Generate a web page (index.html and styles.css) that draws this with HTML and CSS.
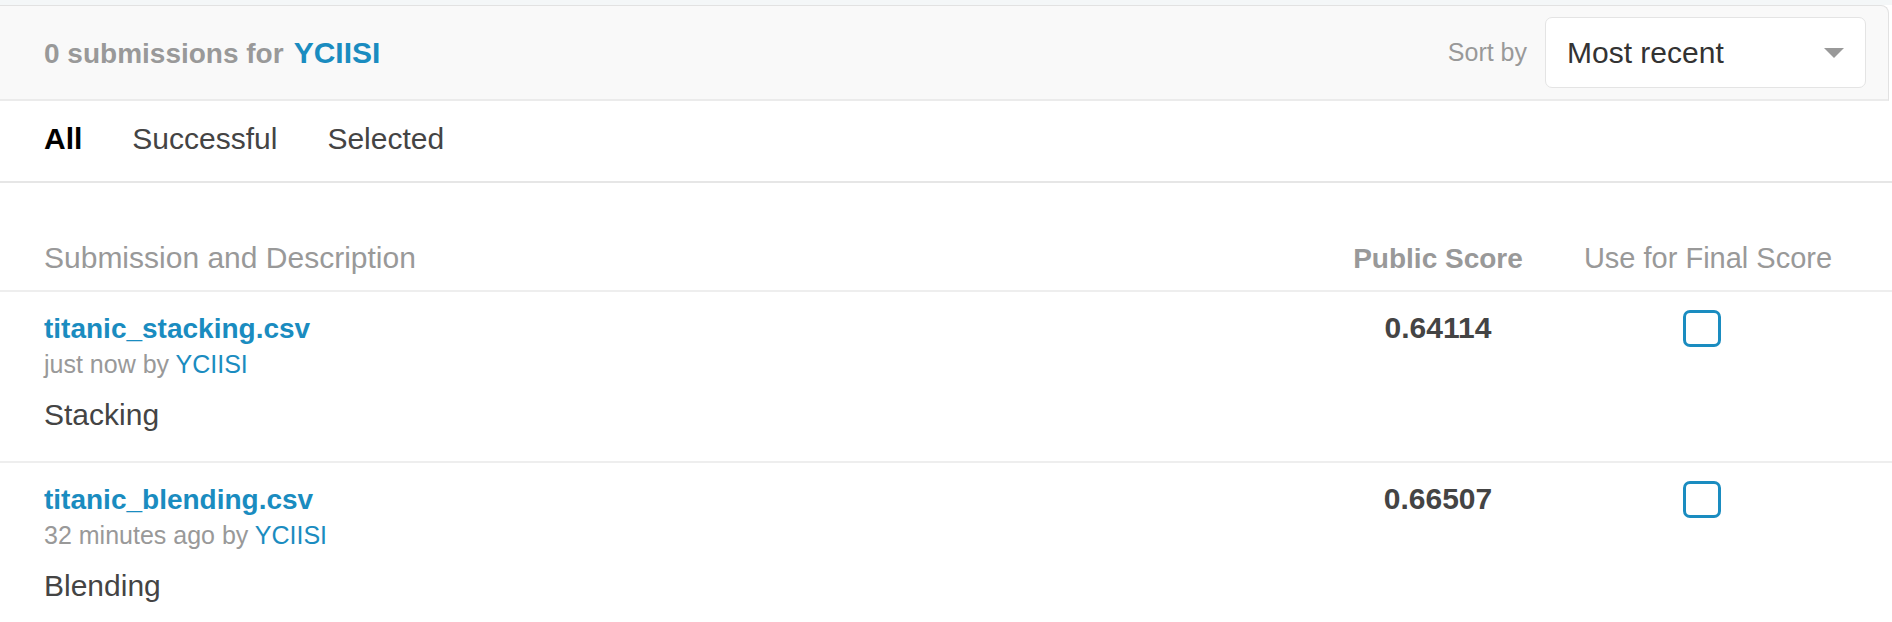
FILE: index.html
```html
<!DOCTYPE html>
<html lang="en">
<head>
<meta charset="utf-8">
<title>Submissions</title>
<link rel="stylesheet" href="styles.css">
</head>
<body>
<div class="top-strip"></div>
<header class="subhead">
  <div class="count">
    <span class="count-label">0 submissions for</span>
    <a class="count-user" href="#">YCIISI</a>
  </div>
  <div class="sort">
    <span class="sort-label">Sort by</span>
    <div class="select">
      <span class="select-value">Most recent</span>
      <span class="caret"></span>
    </div>
  </div>
</header>
<nav class="tabs">
  <a class="tab tab-active" href="#">All</a>
  <a class="tab" href="#">Successful</a>
  <a class="tab" href="#">Selected</a>
</nav>
<section class="table">
  <div class="thead">
    <div class="th th-main">Submission and Description</div>
    <div class="th th-score">Public Score</div>
    <div class="th th-final">Use for Final Score</div>
  </div>
  <div class="row">
    <div class="cell-main">
      <a class="file" href="#">titanic_stacking.csv</a>
      <div class="meta">just now by <a class="user" href="#">YCIISI</a></div>
      <div class="desc">Stacking</div>
    </div>
    <div class="score">0.64114</div>
    <div class="check"></div>
  </div>
  <div class="row">
    <div class="cell-main">
      <a class="file" href="#">titanic_blending.csv</a>
      <div class="meta">32 minutes ago by <a class="user" href="#">YCIISI</a></div>
      <div class="desc">Blending</div>
    </div>
    <div class="score">0.66507</div>
    <div class="check"></div>
  </div>
</section>
</body>
</html>
```
FILE: styles.css
```css
* { box-sizing: border-box; }
html, body {
  margin: 0;
  padding: 0;
  background: #ffffff;
  font-family: "Liberation Sans", Arial, sans-serif;
  overflow: hidden;
}
a { text-decoration: none; }

.top-strip {
  height: 5px;
  background: #f4f7f8;
}

.subhead {
  display: flex;
  align-items: center;
  justify-content: space-between;
  height: 96px;
  margin-right: 3px;
  padding: 0 22px 0 44px;
  background: #f9f9f9;
  border-top: 1px solid #e2e2e2;
  border-right: 1px solid #e2e2e2;
  border-bottom: 2px solid #ebebeb;
  border-top-right-radius: 8px;
}
.count {
  display: flex;
  align-items: baseline;
  font-weight: 700;
}
.count-label {
  font-size: 28px;
  line-height: 33px;
  color: #999999;
}
.count-user {
  font-size: 30px;
  line-height: 33px;
  color: #1a8cc0;
  margin-left: 10px;
}

.sort {
  display: flex;
  align-items: center;
  gap: 18px;
}
.sort-label {
  font-size: 25px;
  line-height: 29px;
  color: #999999;
}
.select {
  display: flex;
  align-items: center;
  justify-content: space-between;
  width: 321px;
  height: 71px;
  padding: 0 21px;
  background: #ffffff;
  border: 1px solid #e4e4e4;
  border-radius: 7px;
}
.select-value {
  font-size: 30px;
  line-height: 34px;
  color: #333333;
}
.caret {
  width: 0;
  height: 0;
  border-left: 10px solid transparent;
  border-right: 10px solid transparent;
  border-top: 10px solid #999999;
}

.tabs {
  display: flex;
  align-items: center;
  gap: 50px;
  height: 82px;
  padding: 0 44px 4px;
  border-bottom: 2px solid #e6e6e6;
}
.tab {
  font-size: 30px;
  line-height: 34px;
  color: #444444;
}
.tab-active {
  color: #000000;
  font-weight: 700;
}

.thead, .row {
  display: grid;
  grid-template-columns: 1fr 170px 250px;
  column-gap: 60px;
  padding-left: 44px;
  padding-right: 59px;
  border-bottom: 2px solid #eeeeee;
  align-items: baseline;
}
.thead {
  padding-top: 58px;
  padding-bottom: 14px;
}
.th {
  color: #999999;
  line-height: 34px;
}
.th-main { font-size: 30px; }
.th-score {
  font-size: 28px;
  font-weight: 700;
  text-align: center;
  white-space: nowrap;
}
.th-final {
  font-size: 29px;
  text-align: center;
  white-space: nowrap;
}

.row {
  padding-top: 18px;
  padding-bottom: 29px;
}
.cell-main {
  padding-top: 3px;
}
.file {
  display: block;
  font-size: 28px;
  line-height: 32px;
  font-weight: 700;
  color: #1a8cc0;
}
.meta {
  margin-top: 5px;
  font-size: 25px;
  line-height: 29px;
  color: #999999;
}
.user { color: #1a8cc0; }
.desc {
  margin-top: 19px;
  font-size: 30px;
  line-height: 34px;
  color: #444444;
}
.score {
  font-size: 30px;
  line-height: 34px;
  font-weight: 700;
  color: #444444;
  text-align: center;
}
.check {
  align-self: start;
  justify-self: center;
  margin-right: 12px;
  width: 38px;
  height: 37px;
  border: 3px solid #1a8cc0;
  border-radius: 7px;
  background: #ffffff;
}
```
